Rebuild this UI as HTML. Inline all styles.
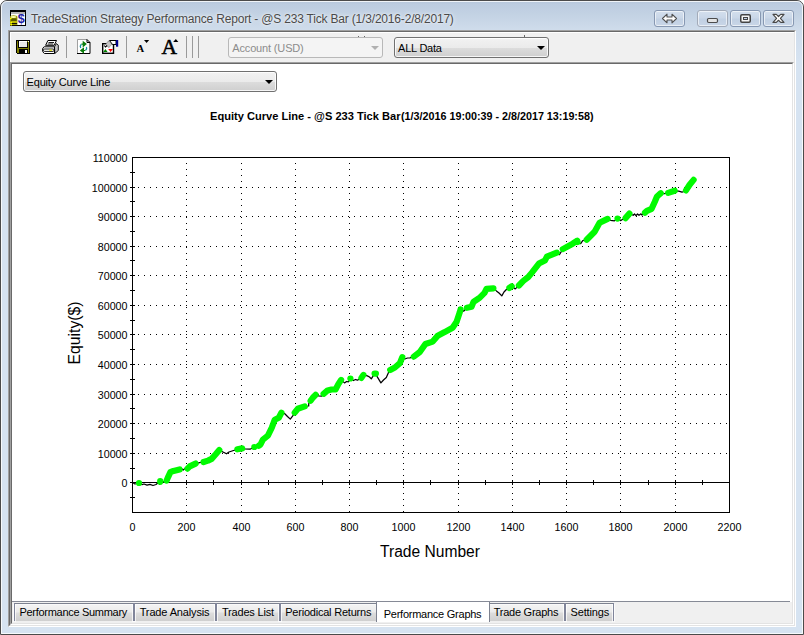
<!DOCTYPE html>
<html><head><meta charset="utf-8"><title>TradeStation Strategy Performance Report</title>
<style>
html,body{margin:0;padding:0;background:#fff;}
body{width:804px;height:635px;overflow:hidden;position:relative;font-family:"Liberation Sans",Arial,sans-serif;font-size:11px;color:#000;}
div,span,svg,i{position:absolute;box-sizing:border-box;}
.win{left:0;top:0;width:804px;height:635px;border:1px solid #4b4b4b;border-radius:7px 7px 0 0;
 background:linear-gradient(#b5c6da 0px,#bccce0 3px,#c4d3e4 15px,#d0ddec 30px,#d6e3f1 60px,#d6e3f1 100%);}
.winhl{left:1px;top:1px;width:802px;height:633px;border:1px solid rgba(255,255,255,.8);border-radius:6px 6px 0 0;}
.tx{white-space:nowrap;line-height:16px;height:16px;}
.cb{top:10px;height:17px;width:31px;border:1px solid #8798b2;border-radius:3px;background:linear-gradient(#d4dfed,#cad7e8 45%,#c1d0e3 55%,#c9d6e7);box-shadow:inset 0 0 0 1px rgba(255,255,255,.6);}
.cb svg{left:-1px;top:-1px;}
.cbg{border-color:#a3abb9;}
.client{left:8px;top:30px;width:788px;height:597px;border:1px solid;border-color:#a0a0a0 #fff #fff #a0a0a0;background:#f0f0f0;}
.client2{left:9px;top:31px;width:786px;height:595px;border:1px solid;border-color:#696969 #e3e3e3 #e3e3e3 #696969;}
.tbhl{left:10px;top:32px;width:784px;height:30px;border-left:1px solid #fff;border-top:1px solid #fff;}
.view{left:10px;top:62px;width:784px;height:563px;border:1px solid;border-color:#a0a0a0 #fff #fff #a0a0a0;background:#fff;}
.view2{left:11px;top:63px;width:782px;height:561px;border:1px solid;border-color:#696969 #e3e3e3 #e3e3e3 #696969;}
.tabstrip{left:12px;top:601px;width:780px;height:22px;background:#f0f0f0;border-top:1px solid #fff;}
.tabline{left:12px;top:601px;width:778px;height:1px;background:#868a96;}
.tbsep{top:36px;width:1px;height:22px;background:#9a9a9a;}
.combo{height:21px;border:1px solid #707070;border-radius:3px;background:linear-gradient(#f2f2f2,#ebebeb 50%,#dddddd 51%,#cfcfcf);box-shadow:inset 0 0 0 1px rgba(255,255,255,.8);}
.combo i{right:3px;top:8px;width:0;height:0;border-left:4px solid transparent;border-right:4px solid transparent;border-top:4px solid #000;}
.combo.dis{background:#f4f4f4;border-color:#b8b8b8;box-shadow:none;}
.combo.dis i{border-top-color:#b0b0b0;}
.chart{left:0;top:0;}
.tabgrp{top:603px;height:18px;border-top:1px solid #7d8290;background:linear-gradient(#ffffff 0px,#f3f3f3 1px,#ebebeb 8px,#dddddd 9px,#cfcfcf 17px);}
.tabsep{top:603px;height:18px;background:#80859a;box-shadow:-1px 1px 0 rgba(255,255,255,.75),1px 1px 0 rgba(255,255,255,.75);}
.tabact{top:602px;height:20px;background:#fff;border-left:1px solid #7d8290;border-right:1px solid #7d8290;}
</style></head><body>
<div class="win"></div><div class="winhl"></div>
<svg style="left:10px;top:10px" width="16" height="16" viewBox="0 0 16 16"><rect x="0" y="0" width="16" height="16" fill="#000"/><rect x="1" y="2" width="14" height="13" fill="#fff"/><rect x="1" y="2" width="14" height="2" fill="#b4b4b4"/>
<text x="7.800" y="12.800" font-family="'Liberation Sans',sans-serif" font-weight="bold" font-size="12.500" fill="#1c1ca4">$</text>
<path d="M0 7Q0 5.200 3.500 5.200Q7.400 5.200 7.400 7V15Q7 16 3.500 16Q0 16 0 15Z" fill="#9c9c00"/><ellipse cx="3.400" cy="7" rx="2.900" ry="1.100" fill="#ffffb0"/><rect x="1" y="8.400" width="5.600" height="2.600" fill="#5a5a00"/><rect x="0.500" y="11.200" width="6.500" height="1.600" fill="#c4c400"/>
<rect x="0" y="8" width="1.600" height="1.200" fill="#ffff00"/><rect x="0.500" y="12" width="1.500" height="1" fill="#ffff00"/><rect x="0.500" y="14" width="1.500" height="1" fill="#ffff00"/><rect x="2" y="13" width="5" height="0.900" fill="#000"/><rect x="2" y="15" width="5" height="0.900" fill="#000"/></svg>
<div class="cb" style="left:654px"><svg width="31" height="17" viewBox="0 0 31 17"><path d="M8.500 8.500L13 4.200V7H18V4.200L22.500 8.500L18 12.800V10H13V12.800Z" fill="#fff" stroke="#505050" stroke-width="1.100" stroke-linejoin="round"/></svg></div>
<div class="cb cbg" style="left:697px"><svg width="31" height="17" viewBox="0 0 31 17"><rect x="10.500" y="8.500" width="10" height="4" rx="1.200" fill="#e4e4e4" stroke="#4c4c4c" stroke-width="1.200"/></svg></div>
<div class="cb" style="left:730px"><svg width="31" height="17" viewBox="0 0 31 17"><rect x="10.750" y="4.750" width="9.500" height="7.500" rx="1.200" fill="#f6f6f6" stroke="#444" stroke-width="1.500"/><rect x="13.500" y="7.500" width="4" height="2" fill="#c4d2e6" stroke="#444" stroke-width="1"/></svg></div>
<div class="cb" style="left:763px"><svg width="31" height="17" viewBox="0 0 31 17"><path d="M10 4.400H13.300L15.500 6.500L17.700 4.400H21L17.400 8.400L21 12.400H17.700L15.500 10.300L13.300 12.400H10L13.600 8.400Z" fill="#fff" stroke="#484848" stroke-width="1.200" stroke-linejoin="round"/></svg></div>
<div class="client"></div><div class="client2"></div><div class="tbhl"></div>
<div class="view"></div><div class="view2"></div>
<!-- toolbar icons -->
<svg style="left:16px;top:40px" width="14" height="14" viewBox="0 0 14 14" shape-rendering="crispEdges"><path d="M0.500 0.500h13v13h-12l-1-1z" fill="#808000" stroke="#000"/><rect x="2" y="1" width="1" height="7" fill="#000"/><rect x="11" y="2" width="1" height="6" fill="#000"/><rect x="2" y="7" width="10" height="1" fill="#000"/><rect x="3" y="1" width="8" height="6" fill="#fff"/><rect x="4" y="2" width="7" height="5" fill="#e6e6e6"/><rect x="3" y="9" width="9" height="4" fill="#000"/><rect x="9" y="10" width="2" height="3" fill="#fff"/><rect x="12" y="1" width="1" height="1" fill="#fff"/></svg>
<svg style="left:42px;top:40px" width="17" height="14" viewBox="0 0 17 14"><path d="M5.900 0.500h8.600l-2.300 4.800h-8.600z" fill="#fff" stroke="#000"/><path d="M6.500 2.500h5.500M5.700 4h5.500" stroke="#000" stroke-width="0.900"/><path d="M12.500 6.800L14.300 3.600L16.300 5.200V10.500L12.800 13.500z" fill="#c4c4c4" stroke="#000" stroke-width="0.900"/><path d="M2.200 6.800H12.500V13.500H2.500Q0.500 12.500 0.500 10Q0.500 7.500 2.200 6.800z" fill="#fff" stroke="#000"/><rect x="1.500" y="9" width="10.500" height="2.400" rx="1" fill="#fff" stroke="#000" stroke-width="0.900"/><rect x="7.200" y="9.600" width="2.800" height="1.200" fill="#e6e600"/></svg>
<div class="tbsep" style="left:66px"></div>
<svg style="left:77px;top:39px" width="14" height="15" viewBox="0 0 14 15"><path d="M0.500 0.500h9.500l3 3v11h-12.500z" fill="#fff"/><path d="M0.500 14.500V0.500h9.500" stroke="#a0a0a0" fill="none"/><path d="M10 0.500l3 3v11H0" stroke="#000" fill="none"/><path d="M10 0.500v3h3" stroke="#000" fill="none"/>
<path d="M6.300 3l2.600 2.100-2.600 2.100zM4.400 5.100h2" fill="#0a7d0a" stroke="#0a7d0a" stroke-width="1.200"/><path d="M4.300 5.300Q2.600 7 3.700 9" fill="none" stroke="#1490a0" stroke-width="1.300"/>
<path d="M6.400 9.400l-2.600 2.100 2.600 2.100zM8.400 11.500h-2" fill="#0a7d0a" stroke="#0a7d0a" stroke-width="1.200"/><path d="M8.600 11.300Q10.300 9.800 9.400 8" fill="none" stroke="#1490a0" stroke-width="1.300"/></svg>
<svg style="left:102px;top:40px" width="17" height="15" viewBox="0 0 17 15"><rect x="0.700" y="3.700" width="10.800" height="9.600" fill="#fff" stroke="#000" stroke-width="1.400"/><path d="M1.200 11.900h4.400l-2.200-2.900z" fill="#008000"/><path d="M6.200 9h4.800l-2.400 2.900z" fill="#ff0000"/>
<path d="M7.500 0.500h6.500v4h-3.500z" fill="#fff" stroke="#000"/><path d="M6.800 0.800l3.200 3.400-3.200 3.400-3.200-3.400z" fill="#c6c6c6" stroke="#333" stroke-width="0.700" stroke-dasharray="1 0.700"/><path d="M2.200 5.500l1.300 1.500 1.500-1.500" fill="none" stroke="#000" stroke-width="1.100"/><rect x="14" y="0" width="2.200" height="6.700" fill="#00008b"/></svg>
<div class="tbsep" style="left:126px"></div>
<svg style="left:136px;top:39px" width="14" height="14" viewBox="0 0 14 14"><text x="0.500" y="12.800" font-family="'Liberation Serif',serif" font-weight="bold" font-size="10.600" fill="#000">A</text><path d="M8 1h5.200l-2.600 3z" fill="#000"/></svg>
<svg style="left:161px;top:38px" width="18" height="17" viewBox="0 0 18 17"><text x="0.600" y="15.800" font-family="'Liberation Serif',serif" font-size="21" fill="#000" stroke="#000" stroke-width="0.55" textLength="15.500" lengthAdjust="spacingAndGlyphs">A</text><path d="M12.200 4h5.200l-2.600-3z" fill="#000"/></svg>
<div class="tbsep" style="left:186px"></div><div class="tbsep" style="left:192px"></div><div class="tbsep" style="left:198px"></div>
<div style="left:358px;top:36px;width:1px;height:1px;background:#666"></div><div style="left:364px;top:36px;width:1px;height:1px;background:#666"></div><div style="left:524px;top:35px;width:1px;height:2px;background:#666"></div>
<div class="combo dis" style="left:228px;top:37px;width:155px"><i></i></div>
<div class="combo" style="left:394px;top:37px;width:155px"><i></i></div>
<div class="combo" style="left:23px;top:71px;width:254px"><i></i></div>
<svg class="chart" width="804" height="635" viewBox="0 0 804 635">
<g stroke="#000" stroke-width="1" stroke-dasharray="1 5" shape-rendering="crispEdges">
<line x1="138.0" y1="453.5" x2="729.5" y2="453.5"/>
<line x1="138.0" y1="423.5" x2="729.5" y2="423.5"/>
<line x1="138.0" y1="394.5" x2="729.5" y2="394.5"/>
<line x1="138.0" y1="364.5" x2="729.5" y2="364.5"/>
<line x1="138.0" y1="334.5" x2="729.5" y2="334.5"/>
<line x1="138.0" y1="305.5" x2="729.5" y2="305.5"/>
<line x1="138.0" y1="275.5" x2="729.5" y2="275.5"/>
<line x1="138.0" y1="246.5" x2="729.5" y2="246.5"/>
<line x1="138.0" y1="216.5" x2="729.5" y2="216.5"/>
<line x1="138.0" y1="187.5" x2="729.5" y2="187.5"/>
<line x1="186.5" y1="163.0" x2="186.5" y2="512.5"/>
<line x1="241.5" y1="163.0" x2="241.5" y2="512.5"/>
<line x1="295.5" y1="163.0" x2="295.5" y2="512.5"/>
<line x1="349.5" y1="163.0" x2="349.5" y2="512.5"/>
<line x1="403.5" y1="163.0" x2="403.5" y2="512.5"/>
<line x1="458.5" y1="163.0" x2="458.5" y2="512.5"/>
<line x1="512.5" y1="163.0" x2="512.5" y2="512.5"/>
<line x1="566.5" y1="163.0" x2="566.5" y2="512.5"/>
<line x1="620.5" y1="163.0" x2="620.5" y2="512.5"/>
<line x1="675.5" y1="163.0" x2="675.5" y2="512.5"/>
</g>
<g stroke="#000" stroke-width="1" fill="none" shape-rendering="crispEdges">
<rect x="132.5" y="157.5" width="597.0" height="355.0"/>
<line x1="132.5" y1="482.5" x2="729.5" y2="482.5"/>
<line x1="130.0" y1="497.5" x2="135.0" y2="497.5"/>
<line x1="130.0" y1="482.5" x2="135.0" y2="482.5"/>
<line x1="130.0" y1="468.5" x2="135.0" y2="468.5"/>
<line x1="130.0" y1="453.5" x2="135.0" y2="453.5"/>
<line x1="130.0" y1="438.5" x2="135.0" y2="438.5"/>
<line x1="130.0" y1="423.5" x2="135.0" y2="423.5"/>
<line x1="130.0" y1="408.5" x2="135.0" y2="408.5"/>
<line x1="130.0" y1="394.5" x2="135.0" y2="394.5"/>
<line x1="130.0" y1="379.5" x2="135.0" y2="379.5"/>
<line x1="130.0" y1="364.5" x2="135.0" y2="364.5"/>
<line x1="130.0" y1="349.5" x2="135.0" y2="349.5"/>
<line x1="130.0" y1="334.5" x2="135.0" y2="334.5"/>
<line x1="130.0" y1="320.5" x2="135.0" y2="320.5"/>
<line x1="130.0" y1="305.5" x2="135.0" y2="305.5"/>
<line x1="130.0" y1="290.5" x2="135.0" y2="290.5"/>
<line x1="130.0" y1="275.5" x2="135.0" y2="275.5"/>
<line x1="130.0" y1="260.5" x2="135.0" y2="260.5"/>
<line x1="130.0" y1="246.5" x2="135.0" y2="246.5"/>
<line x1="130.0" y1="231.5" x2="135.0" y2="231.5"/>
<line x1="130.0" y1="216.5" x2="135.0" y2="216.5"/>
<line x1="130.0" y1="201.5" x2="135.0" y2="201.5"/>
<line x1="130.0" y1="187.5" x2="135.0" y2="187.5"/>
<line x1="130.0" y1="172.5" x2="135.0" y2="172.5"/>
<line x1="159.5" y1="480.0" x2="159.5" y2="485.0"/>
<line x1="186.5" y1="480.0" x2="186.5" y2="485.0"/>
<line x1="213.5" y1="480.0" x2="213.5" y2="485.0"/>
<line x1="241.5" y1="480.0" x2="241.5" y2="485.0"/>
<line x1="268.5" y1="480.0" x2="268.5" y2="485.0"/>
<line x1="295.5" y1="480.0" x2="295.5" y2="485.0"/>
<line x1="322.5" y1="480.0" x2="322.5" y2="485.0"/>
<line x1="349.5" y1="480.0" x2="349.5" y2="485.0"/>
<line x1="376.5" y1="480.0" x2="376.5" y2="485.0"/>
<line x1="403.5" y1="480.0" x2="403.5" y2="485.0"/>
<line x1="430.5" y1="480.0" x2="430.5" y2="485.0"/>
<line x1="458.5" y1="480.0" x2="458.5" y2="485.0"/>
<line x1="485.5" y1="480.0" x2="485.5" y2="485.0"/>
<line x1="512.5" y1="480.0" x2="512.5" y2="485.0"/>
<line x1="539.5" y1="480.0" x2="539.5" y2="485.0"/>
<line x1="566.5" y1="480.0" x2="566.5" y2="485.0"/>
<line x1="593.5" y1="480.0" x2="593.5" y2="485.0"/>
<line x1="620.5" y1="480.0" x2="620.5" y2="485.0"/>
<line x1="648.5" y1="480.0" x2="648.5" y2="485.0"/>
<line x1="675.5" y1="480.0" x2="675.5" y2="485.0"/>
<line x1="702.5" y1="480.0" x2="702.5" y2="485.0"/>
</g>
<polyline fill="none" stroke="#000" stroke-width="1.250" stroke-linejoin="round" points="132.5,482.5 135,484 139,483 142,484.6 144,484 147,485.2 150,484.3 153,485.5 156,484.5 160.2,481.0 160.2,481.8 163.3,481.8 166.6,480.6 168.2,476.8 170.4,472.2 173.5,470.9 179.6,469.4 181.5,468.5 183.2,470 185,468.5 187.5,468.6 189.7,466.4 195.6,463.6 199.6,462.6 203.6,462.0 208,460.6 211.6,458.9 215.5,454.5 219.3,450 221.5,451.4 224,452.5 226.5,453.8 229,452 233.5,450.5 237.4,449.3 242.2,448.4 245,448.8 250,449.2 254.3,447 256.5,446.8 258.8,445.8 260.5,444.5 262.9,439.6 267.9,435.6 271.8,427.7 274.8,419.7 278.8,417.7 281.4,412.7 284.8,413.7 287.5,416.5 290.3,419.1 293.7,414.7 294.7,412.7 297.7,408.8 304.7,406.4 308.7,406 308.7,403.5 310.6,400.8 313,397.5 315.6,394.8 318.6,395.8 321.6,396.2 323.6,393.8 327.6,390.4 331.5,389.5 335.5,389.5 338.5,383.9 341.1,379.9 344.5,382.9 346.5,381.5 348.5,381.8 350.4,378.5 353.4,380.5 355.5,379.5 357.4,380.2 361.4,377.9 363.4,374.9 367.4,375.9 369.5,377 371.3,378.9 374.6,373.6 375.9,373.6 377.3,376.9 380.9,382.9 383.5,380 386.3,377.5 388.3,372.9 390.2,369.9 394.9,367.5 399.9,363.2 402.3,357.2 404.9,359 407.5,358 409.9,357.8 413.8,356.6 419.8,352 425.4,344 432.7,341.6 437.7,335.7 444.7,332.1 452.6,327.7 456.6,321.7 459.6,312.8 460.6,309.4 463.6,311.2 467,307.8 471.5,306.8 473.5,301.8 479.5,297.9 484.5,292.9 486.5,288.9 493.4,288.3 496.4,290.9 499,293 501.8,295.9 504,292 506.4,289.5 509.4,287.9 511.7,286.3 515.3,288.9 518.9,285.5 523.3,280.9 528.3,277 531.9,272.6 538.9,263.6 544.9,260.6 546.9,256.7 556.8,252.7 559.4,254.7 562.8,249.1 572.7,243.7 577.3,240.7 577.6,242 580.7,243.7 582.7,240.7 586.7,239.8 594.6,231.8 599.6,222.8 607.6,218.9 610.5,220.4 614.5,220.8 617.5,218.6 620.5,220.6 622.5,219.5 625.5,218.1 629.4,213.6 633.2,215.3 634.5,214 636,215.6 637.5,214 639,215.3 641,213.8 642,215 645,212.6 647,210.8 651.6,208.8 654.8,201.7 657.0,196.5 660.8,193.2 664.5,193.7 668.2,192.9 674.7,190.8 678.7,191.2 682,192.2 686,190.4 689.6,184.8 693.6,179.9"/>
<g fill="none" stroke="#00fa00" stroke-width="6.2" stroke-linecap="round" stroke-linejoin="round">
<path d="M139,483h0.01"/>
<polyline points="160.2,481.0 160.2,481.8"/>
<polyline points="166.6,480.6 168.2,476.8 170.4,472.2 173.5,470.9 179.6,469.4"/>
<polyline points="187.5,468.6 189.7,466.4 195.6,463.6"/>
<polyline points="203.6,462.0 208,460.6 211.6,458.9 215.5,454.5 219.3,450"/>
<polyline points="237.4,449.3 242.2,448.4"/>
<path d="M254.3,447h0.01"/>
<polyline points="258.8,445.8 260.5,444.5 262.9,439.6 267.9,435.6 271.8,427.7 274.8,419.7 278.8,417.7 281.4,412.7"/>
<polyline points="294.7,412.7 297.7,408.8 304.7,406.4"/>
<polyline points="310.6,400.8 313,397.5 315.6,394.8"/>
<polyline points="323.6,393.8 327.6,390.4 331.5,389.5 335.5,389.5 338.5,383.9 341.1,379.9"/>
<path d="M350.4,378.5h0.01"/>
<polyline points="361.4,377.9 363.4,374.9"/>
<polyline points="374.6,373.6 375.9,373.6"/>
<polyline points="390.2,369.9 394.9,367.5 399.9,363.2 402.3,357.2"/>
<polyline points="413.8,356.6 419.8,352 425.4,344 432.7,341.6 437.7,335.7 444.7,332.1 452.6,327.7 456.6,321.7 459.6,312.8 460.6,309.4"/>
<polyline points="467,307.8 471.5,306.8 473.5,301.8 479.5,297.9 484.5,292.9 486.5,288.9 493.4,288.3"/>
<polyline points="509.4,287.9 511.7,286.3"/>
<polyline points="518.9,285.5 523.3,280.9 528.3,277 531.9,272.6 538.9,263.6 544.9,260.6 546.9,256.7 556.8,252.7"/>
<polyline points="562.8,249.1 572.7,243.7 577.3,240.7 577.6,242"/>
<polyline points="586.7,239.8 594.6,231.8 599.6,222.8 607.6,218.9"/>
<path d="M617.5,218.6h0.01"/>
<polyline points="625.5,218.1 629.4,213.6"/>
<polyline points="645,212.6 647,210.8 651.6,208.8 654.8,201.7 657.0,196.5 660.8,193.2"/>
<polyline points="668.2,192.9 674.7,190.8"/>
<polyline points="686,190.4 689.6,184.8 693.6,179.9"/>
</g>
<g font-family="'Liberation Sans', Arial, sans-serif" font-size="10.7" fill="#000">
<text x="127.5" y="486.9" text-anchor="end">0</text>
<text x="127.5" y="457.9" text-anchor="end">10000</text>
<text x="127.5" y="427.9" text-anchor="end">20000</text>
<text x="127.5" y="398.9" text-anchor="end">30000</text>
<text x="127.5" y="368.9" text-anchor="end">40000</text>
<text x="127.5" y="338.9" text-anchor="end">50000</text>
<text x="127.5" y="309.9" text-anchor="end">60000</text>
<text x="127.5" y="279.9" text-anchor="end">70000</text>
<text x="127.5" y="250.9" text-anchor="end">80000</text>
<text x="127.5" y="220.9" text-anchor="end">90000</text>
<text x="127.5" y="191.9" text-anchor="end">100000</text>
<text x="127.5" y="161.9" text-anchor="end">110000</text>
<text x="132.5" y="531" text-anchor="middle">0</text>
<text x="186.5" y="531" text-anchor="middle">200</text>
<text x="241.5" y="531" text-anchor="middle">400</text>
<text x="295.5" y="531" text-anchor="middle">600</text>
<text x="349.5" y="531" text-anchor="middle">800</text>
<text x="403.5" y="531" text-anchor="middle">1000</text>
<text x="458.5" y="531" text-anchor="middle">1200</text>
<text x="512.5" y="531" text-anchor="middle">1400</text>
<text x="566.5" y="531" text-anchor="middle">1600</text>
<text x="620.5" y="531" text-anchor="middle">1800</text>
<text x="675.5" y="531" text-anchor="middle">2000</text>
<text x="729.5" y="531" text-anchor="middle">2200</text>
</g>
<text x="210" y="120" font-family="'Liberation Sans', Arial, sans-serif" font-weight="bold" font-size="11" textLength="190.5" lengthAdjust="spacingAndGlyphs">Equity Curve Line - @S 233 Tick Bar</text>
<text x="401" y="120" font-family="'Liberation Sans', Arial, sans-serif" font-weight="bold" font-size="11" textLength="192.5" lengthAdjust="spacingAndGlyphs">(1/3/2016 19:00:39 - 2/8/2017 13:19:58)</text>
<text x="430" y="556.7" text-anchor="middle" font-family="'Liberation Sans', Arial, sans-serif" font-size="16" textLength="100" lengthAdjust="spacingAndGlyphs">Trade Number</text>
<text transform="translate(79.5,333) rotate(-90)" text-anchor="middle" font-family="'Liberation Sans', Arial, sans-serif" font-size="16" textLength="63" lengthAdjust="spacingAndGlyphs">Equity($)</text>
</svg>
<div class="tabstrip"></div><div class="tabline"></div>
<div class="tabgrp" style="left:14px;width:362px"></div><div class="tabgrp" style="left:490px;width:124px"></div><div class="tabsep" style="left:14px;width:1px"></div><div class="tabsep" style="left:133px;width:2px"></div><div class="tabsep" style="left:215px;width:2px"></div><div class="tabsep" style="left:279px;width:2px"></div><div class="tabsep" style="left:564px;width:2px"></div><div class="tabsep" style="left:613px;width:1px"></div><div class="tabact" style="left:376px;width:114px"></div>
<span class="tx" id="t_title" style="left:30.9px;top:10.73px;font-size:12px;letter-spacing:-0.186px;color:#4a4a4a;text-shadow:0 0 5px rgba(255,255,255,.9),0 0 2px rgba(255,255,255,.8);">TradeStation Strategy Performance Report - @S 233 Tick Bar (1/3/2016-2/8/2017)</span>
<span class="tx" id="t_eq" style="left:26.6px;top:73.86px;font-size:11px;letter-spacing:-0.196px;">Equity Curve Line</span>
<span class="tx" id="t_acc" style="left:232.3px;top:39.86px;font-size:11px;letter-spacing:-0.158px;color:#8c8c8c;">Account (USD)</span>
<span class="tx" id="t_all" style="left:398px;top:39.86px;font-size:11px;letter-spacing:-0.209px;">ALL Data</span>
<span class="tx" id="t_tab1" style="left:19.5px;top:604.16px;font-size:11px;letter-spacing:-0.294px;">Performance Summary</span>
<span class="tx" id="t_tab2" style="left:139.7px;top:604.16px;font-size:11px;letter-spacing:-0.139px;">Trade Analysis</span>
<span class="tx" id="t_tab3" style="left:221.9px;top:604.16px;font-size:11px;letter-spacing:-0.174px;">Trades List</span>
<span class="tx" id="t_tab4" style="left:285.2px;top:604.16px;font-size:11px;letter-spacing:-0.215px;">Periodical Returns</span>
<span class="tx" id="t_tab5" style="left:383.7px;top:606.36px;font-size:11px;letter-spacing:-0.245px;">Performance Graphs</span>
<span class="tx" id="t_tab6" style="left:493.7px;top:604.16px;font-size:11px;letter-spacing:-0.247px;">Trade Graphs</span>
<span class="tx" id="t_tab7" style="left:570.5px;top:604.16px;font-size:11px;letter-spacing:-0.156px;">Settings</span>

</body></html>
